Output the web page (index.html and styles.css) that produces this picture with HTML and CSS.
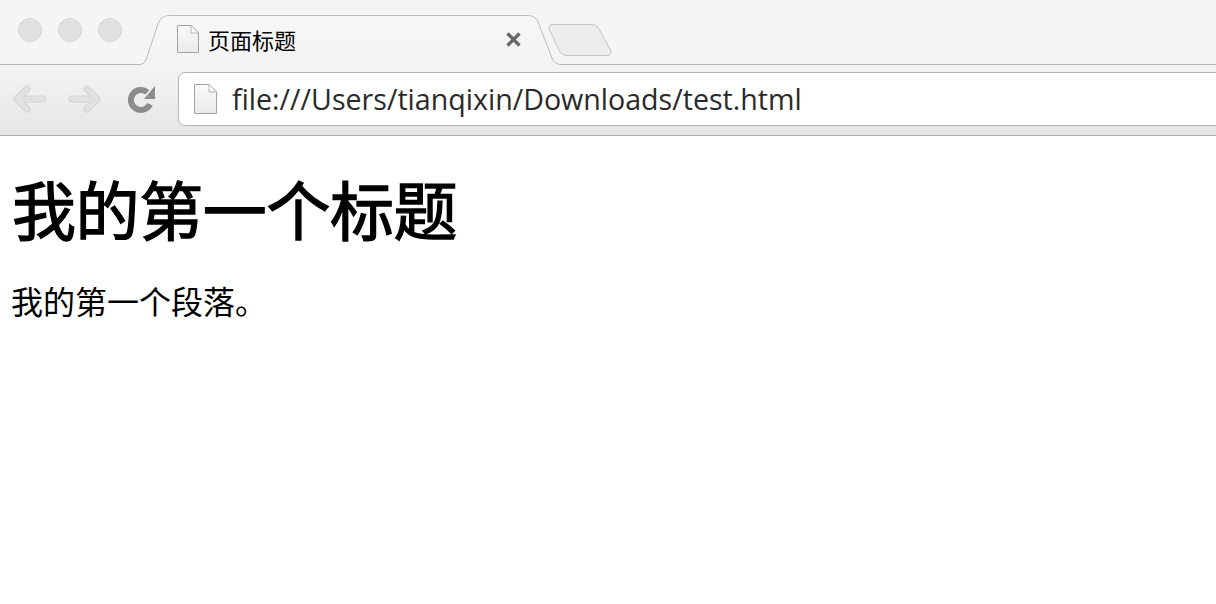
FILE: index.html
```html
<!DOCTYPE html>
<html lang="zh-CN">
<head>
    <meta charset="UTF-8">
    <title>页面标题</title>
    <link rel="stylesheet" href="styles.css">
</head>
<body>
    <div class="tabstrip">
        <div class="lights">
            <span class="light"></span>
            <span class="light"></span>
            <span class="light"></span>
        </div>
        <div class="tab">
            <svg class="tab-shape" width="424" height="50" viewBox="0 0 424 50">
                <defs>
                    <linearGradient id="tabfill" x1="0" y1="0" x2="0" y2="1">
                        <stop offset="0" stop-color="#f7f7f7"/>
                        <stop offset="1" stop-color="#f3f3f3"/>
                    </linearGradient>
                </defs>
                <path d="M0 50V49.5H3Q7 49.5 9 45L21 9Q24 .5 32 .5H391Q398 .5 401 7L415 43Q418 49.5 424 49.5V50Z" fill="url(#tabfill)"/>
                <path d="M0 49.5H3Q7 49.5 9 45L21 9Q24 .5 32 .5H391Q398 .5 401 7L415 43Q418 49.5 424 49.5" fill="none" stroke="#bdbdbd"/>
            </svg>
            <svg class="doc-icon" width="22" height="28" viewBox="0 0 22 28">
                <defs>
                    <linearGradient id="docfill" x1="0" y1="0" x2="0" y2="1">
                        <stop offset="0" stop-color="#fafafa"/>
                        <stop offset="1" stop-color="#e9e9e9"/>
                    </linearGradient>
                </defs>
                <path d="M.5 .5H14L21.5 8V27.500H.5Z" fill="url(#docfill)" stroke="#a2a2a2"/>
                <path d="M14 .5V8H21.500Z" fill="#fff" stroke="#b4b4b4"/>
            </svg>
            <span class="tab-title">页面标题</span>
            <svg class="tab-close" width="17" height="17" viewBox="0 0 17 17">
                <path d="M2.500 2.500L14.500 14.500M14.500 2.500L2.500 14.500" stroke="#666" stroke-width="3.200"/>
            </svg>
        </div>
        <svg class="new-tab" width="65" height="32" viewBox="0 0 65 32">
            <path d="M4 .5H43Q49 .5 51 5L62.500 26Q64.500 31.500 59 31.500H20Q13 31.500 11 26L1 5Q0 .5 4 .5Z" fill="#ececec" stroke="#c4c4c4"/>
        </svg>
    </div>

    <div class="toolbar">
        <svg class="nav-icon" width="36" height="32" viewBox="0 0 36 32">
            <path d="M31 15H6M15 5L5 15L15 25" fill="none" stroke="#d3d3d3" stroke-width="7" stroke-linecap="round" stroke-linejoin="round"/>
            <path d="M31 15H6M15 5L5 15L15 25" fill="none" stroke="#e1e1e1" stroke-width="5" stroke-linecap="round" stroke-linejoin="round"/>
        </svg>
        <svg class="nav-icon" width="36" height="32" viewBox="0 0 36 32">
            <path d="M5 15H30M20 5L30 15L20 25" fill="none" stroke="#d3d3d3" stroke-width="7" stroke-linecap="round" stroke-linejoin="round"/>
            <path d="M5 15H30M20 5L30 15L20 25" fill="none" stroke="#e1e1e1" stroke-width="5" stroke-linecap="round" stroke-linejoin="round"/>
        </svg>
        <svg class="nav-icon reload" width="32" height="32" viewBox="0 0 32 32">
            <path d="M21.400 8.300A10 10 0 1 0 24 20.200" fill="none" stroke="#8c8c8c" stroke-width="6"/>
            <path d="M29 2V15H18Z" fill="#8c8c8c"/>
        </svg>
        <div class="address">
            <svg class="doc-icon" width="23" height="30" viewBox="0 0 23 30">
                <path d="M.5 .5H15L22.500 8V29.500H.5Z" fill="url(#docfill)" stroke="#a2a2a2"/>
                <path d="M15 .5V8H22.500Z" fill="#fff" stroke="#b4b4b4"/>
            </svg>
            <span class="url">file:///Users/tianqixin/Downloads/test.html</span>
        </div>
    </div>

    <div class="page">
        <h1>我的第一个标题</h1>
        <p>我的第一个段落。</p>
    </div>
</body>
</html>
```

FILE: styles.css
```css
*{
    margin: 0;
    padding: 0;
    box-sizing: border-box;
}

html, body{
    height: 100%;
    overflow: hidden;
    background-color: #fff;
}

.tabstrip{
    display: flex;
    align-items: flex-start;
    height: 65px;
    padding-left: 18px;
    background-color: #f5f5f5;
    border-bottom: 1px solid #b4b4b4;
}
.lights{
    display: flex;
    gap: 16px;
    margin-top: 18px;
}
.light{
    width: 24px;
    height: 24px;
    border-radius: 50%;
    background-color: #e0e0e0;
    border: 1px solid #d6d6d6;
}

.tab{
    position: relative;
    display: flex;
    align-items: center;
    width: 424px;
    height: 50px;
    margin: 15px 0 0 15px;
    padding: 0 34px 0 40px;
}
.tab-shape{
    position: absolute;
    left: 0;
    top: 0;
}
.tab .doc-icon{
    position: relative;
    margin-top: -2px;
}
.tab-title{
    position: relative;
    margin: -3px 0 0 9px;
    font-family: "Liberation Sans", "Noto Sans CJK SC", sans-serif;
    font-size: 22px;
    color: #000;
}
.tab-close{
    position: relative;
    margin: -1px 0 0 auto;
    transform: translateX(-5px);
}
.new-tab{
    margin: 24px 0 0 -13px;
}

.toolbar{
    display: flex;
    align-items: flex-start;
    height: 71px;
    padding: 7px 0 0 12px;
    background: linear-gradient(#f4f4f4, #e6e6e6);
    border-bottom: 1px solid #b0b0b0;
}
.nav-icon{
    margin: 12px 19px 0 0;
}
.reload{
    margin: 12px 0 0 4px;
}
.address{
    display: flex;
    align-items: center;
    flex: 1;
    height: 54px;
    margin: 0 -10px 0 20px;
    padding-left: 15px;
    background-color: #fff;
    border: 1px solid #b4b4b4;
    border-radius: 7px;
}
.url{
    margin: -2px 0 0 15px;
    font-family: "Open Sans", "Liberation Sans", sans-serif;
    font-size: 28.6px;
    color: #2a2a2a;
}

.page{
    padding-left: 12px;
    font-family: "Liberation Sans", "Noto Sans CJK SC", sans-serif;
    color: #000;
}
h1{
    margin-top: 39px;
    font-size: 64px;
    line-height: 76px;
    font-weight: normal;
    letter-spacing: -0.4px;
    -webkit-text-stroke: 1.3px #000;
}
p{
    margin: 31px 0 0 -1px;
    font-size: 32px;
    line-height: 42px;
}
```
